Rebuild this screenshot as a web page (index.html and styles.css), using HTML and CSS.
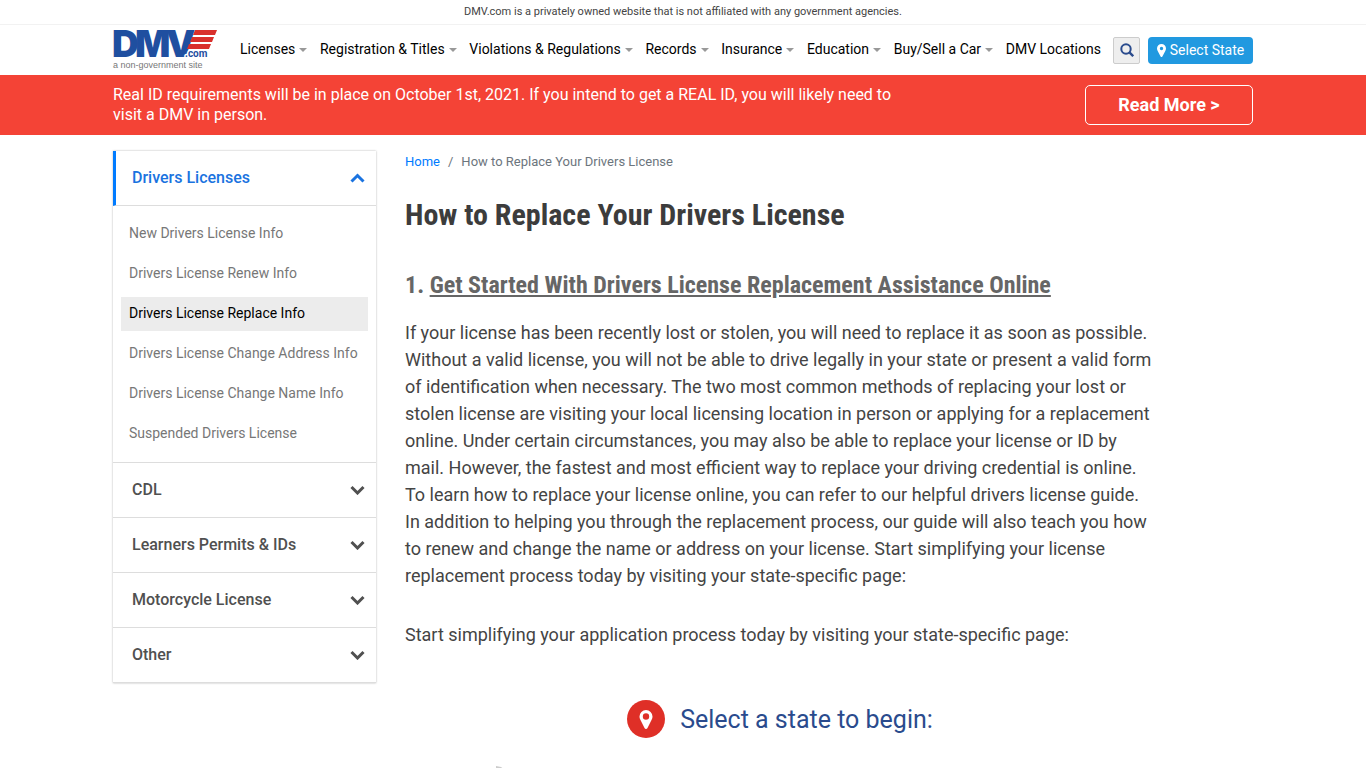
FILE: index.html
```html
<!DOCTYPE html>
<html lang="en">
<head>
    <meta charset="UTF-8">
    <meta name="viewport" content="width=device-width, initial-scale=1.0">
    <title>How to Replace Your Drivers License</title>
    <link rel="stylesheet" href="styles.css">
</head>
<body>
    <div class="disclaimer">DMV.com is a privately owned website that is not affiliated with any government agencies.</div>

    <header class="header">
        <div class="container header-row">
            <a class="logo" href="#">
                <svg width="104" height="42" viewBox="0 0 104 42" role="img" aria-label="DMV.com">
                    <text class="logo-name" x="-1 22 53" y="28">DMV</text>
                    <g fill="#d9302c">
                        <path d="M82 1h22l-2 5H80z"/>
                        <path d="M79 8h22l-2 5H77z"/>
                        <path d="M76 15h22l-2 5H74z"/>
                    </g>
                    <text class="logo-com" x="72" y="28">.com</text>
                    <text class="logo-note" x="0" y="39">a non-government site</text>
                </svg>
            </a>
            <nav class="nav">
                <a class="has-menu" href="#">Licenses</a>
                <a class="has-menu" href="#">Registration &amp; Titles</a>
                <a class="has-menu" href="#">Violations &amp; Regulations</a>
                <a class="has-menu" href="#">Records</a>
                <a class="has-menu" href="#">Insurance</a>
                <a class="has-menu" href="#">Education</a>
                <a class="has-menu" href="#">Buy/Sell a Car</a>
                <a href="#">DMV Locations</a>
            </nav>
            <button class="search-btn" type="button" aria-label="Search">
                <svg width="14" height="14" viewBox="0 0 14 14" fill="none" stroke="#2a4b8d" stroke-width="2">
                    <circle cx="6" cy="6" r="4.7"/>
                    <path d="M9.4 9.4l3.8 3.8" stroke-width="2.4"/>
                </svg>
            </button>
            <button class="state-btn" type="button">
                <svg width="9" height="13" viewBox="0 0 9 13" fill="#fff" fill-rule="evenodd">
                    <path d="M4.500 0A4.500 4.500 0 0 0 0 4.500c0 1 .3 1.700.7 2.500l2.900 5.400c.4.800 1.400.8 1.800 0L8.300 7c.4-.8.7-1.500.7-2.500A4.500 4.500 0 0 0 4.500 0zm0 2.800a1.700 1.700 0 1 1 0 3.400 1.700 1.700 0 0 1 0-3.400z"/>
                </svg>
                Select State
            </button>
        </div>
    </header>

    <div class="alert">
        <div class="container alert-row">
            <p>Real ID requirements will be in place on October 1st, 2021. If you intend to get a REAL ID, you will likely need to visit a DMV in person.</p>
            <a class="read-more" href="#">Read More &gt;</a>
        </div>
    </div>

    <div class="container page">
        <aside class="sidebar">
            <button class="panel-title active" type="button" aria-expanded="true">
                Drivers Licenses
                <svg width="15" height="10" viewBox="0 0 15 10" fill="none" stroke="currentColor" stroke-width="3"><path d="M1.500 8.500l6-6 6 6"/></svg>
            </button>
            <ul class="panel-list">
                <li><a href="#">New Drivers License Info</a></li>
                <li><a href="#">Drivers License Renew Info</a></li>
                <li><a class="current" href="#">Drivers License Replace Info</a></li>
                <li><a href="#">Drivers License Change Address Info</a></li>
                <li><a href="#">Drivers License Change Name Info</a></li>
                <li><a href="#">Suspended Drivers License</a></li>
            </ul>
            <button class="panel-title" type="button">
                CDL
                <svg width="15" height="10" viewBox="0 0 15 10" fill="none" stroke="currentColor" stroke-width="3"><path d="M1.500 2l6 6 6-6"/></svg>
            </button>
            <button class="panel-title" type="button">
                Learners Permits &amp; IDs
                <svg width="15" height="10" viewBox="0 0 15 10" fill="none" stroke="currentColor" stroke-width="3"><path d="M1.500 2l6 6 6-6"/></svg>
            </button>
            <button class="panel-title" type="button">
                Motorcycle License
                <svg width="15" height="10" viewBox="0 0 15 10" fill="none" stroke="currentColor" stroke-width="3"><path d="M1.500 2l6 6 6-6"/></svg>
            </button>
            <button class="panel-title" type="button">
                Other
                <svg width="15" height="10" viewBox="0 0 15 10" fill="none" stroke="currentColor" stroke-width="3"><path d="M1.500 2l6 6 6-6"/></svg>
            </button>
        </aside>

        <main class="content">
            <nav class="breadcrumb">
                <a href="#">Home</a>
                <span>/</span>
                <span>How to Replace Your Drivers License</span>
            </nav>
            <h1>How to Replace Your Drivers License</h1>
            <h2>1. <u>Get Started With Drivers License Replacement Assistance Online</u></h2>
            <p>If your license has been recently lost or stolen, you will need to replace it as soon as possible. Without a valid license, you will not be able to drive legally in your state or present a valid form of identification when necessary. The two most common methods of replacing your lost or stolen license are visiting your local licensing location in person or applying for a replacement online. Under certain circumstances, you may also be able to replace your license or ID by mail. However, the fastest and most efficient way to replace your driving credential is online. To learn how to replace your license online, you can refer to our helpful drivers license guide. In addition to helping you through the replacement process, our guide will also teach you how to renew and change the name or address on your license. Start simplifying your license replacement process today by visiting your state-specific page:</p>
            <p>Start simplifying your application process today by visiting your state-specific page:</p>
            <div class="state-title">
                <svg width="38" height="38" viewBox="0 0 38 38">
                    <circle cx="19" cy="19" r="19" fill="#df2f27"/>
                    <path fill="#fff" fill-rule="evenodd" d="M19 10a6.500 6.500 0 0 0-6.500 6.500c0 1.500.5 2.500 1 3.500l4 8c.6 1.300 2.400 1.300 3 0l4-8c.5-1 1-2 1-3.500A6.500 6.500 0 0 0 19 10zm0 3.300a3.200 3.200 0 1 1 0 6.400 3.200 3.200 0 0 1 0-6.400z"/>
                </svg>
                Select a state to begin:
            </div>
            <svg class="map" viewBox="0 0 750 460" aria-hidden="true">
                <path fill="#ccc" d="M91 0l5 1 4 3-3 6-6 2z"/>
            </svg>
        </main>
    </div>
</body>
</html>
```

FILE: styles.css
```css
* {
    margin: 0;
    padding: 0;
    box-sizing: border-box;
}

body {
    font-family: Roboto, "Liberation Sans", sans-serif;
    font-size: 14px;
    color: #444;
    background-color: #fff;
    overflow-x: hidden;
}

a {
    color: #0275d8;
    text-decoration: none;
}

button {
    font-family: inherit;
    cursor: pointer;
}

.container {
    max-width: 1140px;
    margin: 0 auto;
}

.disclaimer {
    font-size: 11px;
    line-height: 24px;
    text-align: center;
    border-bottom: 1px solid #f2f2f2;
}

.header-row {
    display: flex;
    align-items: center;
    height: 50px;
}

.logo {
    display: flex;
    margin-right: 23px;
}

.logo svg {
    overflow: visible;
}

.logo-name {
    font-family: Inter, Roboto, sans-serif;
    font-size: 37px;
    font-weight: 900;
    fill: #1f4fa0;
}

.logo-com {
    font-size: 10px;
    font-weight: 700;
    fill: #1f4fa0;
    stroke: #fff;
    stroke-width: 3px;
    paint-order: stroke;
}

.logo-note {
    font-family: "Liberation Sans", sans-serif;
    font-size: 9px;
    fill: #777;
}

.nav {
    flex: 1;
    display: flex;
    justify-content: space-between;
    margin-right: 12px;
    padding-bottom: 2px;
    white-space: nowrap;
}

.nav a {
    color: #000;
    line-height: 20px;
}

.has-menu::after {
    content: "";
    display: inline-block;
    margin-left: 4px;
    vertical-align: 2px;
    border-top: 4px solid #999;
    border-left: 4px solid transparent;
    border-right: 4px solid transparent;
}

.search-btn {
    display: flex;
    align-items: center;
    justify-content: center;
    width: 27px;
    height: 27px;
    margin-right: 8px;
    border: 1px solid #ccc;
    border-radius: 2px;
    background-color: #eee;
}

.state-btn {
    display: flex;
    align-items: center;
    justify-content: center;
    gap: 4px;
    width: 105px;
    height: 27px;
    border: none;
    border-radius: 4px;
    background-color: #2199e0;
    color: #fff;
    font-size: 14px;
}

.alert {
    padding: 10px 0;
    background-color: #f44336;
    color: #fff;
}

.alert-row {
    display: flex;
    justify-content: space-between;
}

.alert p {
    max-width: 800px;
    font-size: 16px;
    line-height: 20px;
}

.read-more {
    width: 168px;
    border: 1px solid #fff;
    border-radius: 5px;
    color: #fff;
    font-size: 18px;
    font-weight: 700;
    line-height: 38px;
    text-align: center;
}

.page {
    display: flex;
    align-items: flex-start;
    gap: 29px;
    padding-top: 16px;
}

.sidebar {
    flex: 0 0 263px;
    box-shadow: 0 0 2px rgba(0, 0, 0, 0.3);
}

.panel-title {
    display: flex;
    align-items: center;
    justify-content: space-between;
    width: 100%;
    height: 55px;
    padding: 0 11px 2px 19px;
    border: none;
    border-bottom: 1px solid #ddd;
    background-color: #fff;
    color: #505050;
    font-size: 16px;
    font-weight: 500;
}

.panel-title svg {
    margin-top: 2px;
}

.panel-title.active {
    padding-left: 16px;
    border-left: 3px solid #007bff;
    color: #1a73e0;
}

.panel-list {
    display: grid;
    gap: 6px;
    padding: 11px 8px;
    border-bottom: 1px solid #ddd;
    list-style: none;
}

.panel-list a {
    display: block;
    padding: 0 8px 2px;
    color: #777;
    line-height: 32px;
}

.panel-list .current {
    background-color: #ececec;
    color: #000;
}

.content {
    flex: 0 1 750px;
    min-width: 0;
}

.breadcrumb {
    display: flex;
    gap: 8px;
    margin-bottom: 22px;
    color: #6c757d;
    font-size: 13px;
    line-height: 22px;
}

.breadcrumb a {
    color: #007bff;
}

h1,
h2 {
    font-family: "Roboto Condensed", Roboto, sans-serif;
    font-weight: 700;
}

h1 {
    margin-bottom: 32px;
    color: #3c3c3c;
    font-size: 30px;
    line-height: 40px;
}

h2 {
    margin-bottom: 16px;
    color: #666;
    font-size: 24px;
    line-height: 36px;
}

.content p {
    margin-bottom: 32px;
    font-size: 18px;
    line-height: 27px;
}

.state-title {
    display: flex;
    align-items: center;
    justify-content: center;
    gap: 15px;
    margin-top: 52px;
    color: #2a4b8d;
    font-size: 25px;
}

.map {
    display: block;
    width: 100%;
    margin-top: 28px;
}
```
